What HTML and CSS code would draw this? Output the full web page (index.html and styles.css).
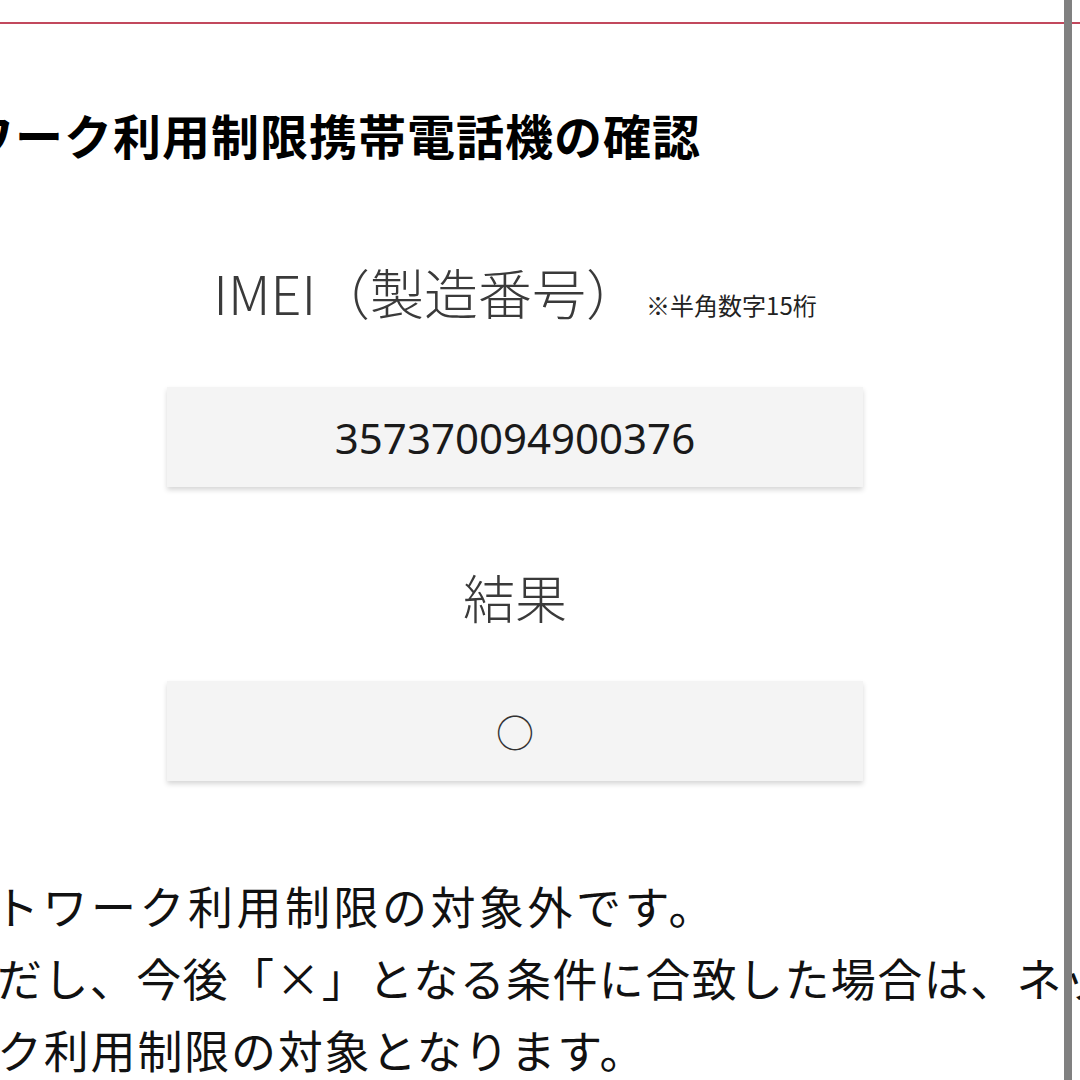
FILE: index.html
```html
<!DOCTYPE html>
<html lang="ja">
<head>
  <meta charset="UTF-8" />
  <meta name="viewport" content="width=device-width, initial-scale=1.0"/>
  <title>ネットワーク利用制限携帯電話機の確認</title>
  <link rel="stylesheet" href="styles.css">
</head>
<body>

  <!-- ヘッダー下線 -->
  <header class="topbar"></header>

  <main class="content">
    <h1 class="page-title">ネットワーク利用制限携帯電話機の確認</h1>

    <div class="field">
      <p class="field-label">IMEI（製造番号）<small class="field-note">※半角数字15桁</small></p>
      <div class="field-box">357370094900376</div>
    </div>

    <div class="field result">
      <p class="field-label">結果</p>
      <div class="field-box"><span class="mark">○</span></div>
    </div>

    <p class="notice">
      <span class="line l1">トワーク利用制限の対象外です。</span>
      <span class="line l2">だし、今後「×」となる条件に合致した場合は、ネットワー</span>
      <span class="line l3">ク利用制限の対象となります。</span>
    </p>
  </main>

  <div class="scrollbar"></div>
</body>
</html>
```

FILE: styles.css
```css
* {
  box-sizing: border-box;
}

html,
body {
  height: 100%;
}

body {
  margin: 0;
  overflow: hidden;
  background: #fff;
  color: #111;
  font-family: "Noto Sans CJK JP", "Noto Sans", sans-serif;
}

.topbar {
  height: 24px;
  border-bottom: 2px solid #c2485d;
}

.content {
  padding-right: 50px;
}

.page-title {
  margin: 74px 0 0 -181px;
  font-size: 48px;
  line-height: 72px;
  font-weight: 700;
  letter-spacing: 1px;
  white-space: nowrap;
  color: #000;
}

.field {
  display: flex;
  flex-direction: column;
  align-items: center;
}

.field-label {
  margin: 82px 0 0;
  font-size: 54px;
  line-height: 80px;
  font-weight: 300;
  color: #3a3a3a;
  white-space: nowrap;
}

.field-note {
  margin-left: 6px;
  font-size: 24px;
  color: #222;
  font-weight: 400;
}

.field-box {
  width: 696px;
  height: 100px;
  margin-top: 42px;
  background: #f4f4f4;
  box-shadow: 0 3px 5px rgba(0, 0, 0, 0.16);
  display: flex;
  align-items: center;
  justify-content: center;
  font-family: "Noto Sans", sans-serif;
  font-size: 42px;
  color: #1a1a1a;
}

.result .field-label {
  margin-top: 70px;
  font-size: 52px;
}

.result .field-box {
  margin-top: 44px;
}

.mark {
  font-family: "Noto Sans CJK JP", sans-serif;
  font-size: 38px;
  line-height: 1;
  color: #333;
}

.notice {
  margin: 89px 0 0;
  font-size: 45px;
  line-height: 72px;
  white-space: nowrap;
}

.line {
  display: block;
}

.l1 {
  margin-left: -6px;
  letter-spacing: 3.5px;
}

.l2 {
  margin-left: -3px;
  letter-spacing: 1.4px;
}

.l3 {
  margin-left: -3px;
  letter-spacing: 1.8px;
}

/* スクロールバー */
.scrollbar {
  position: fixed;
  top: 0;
  right: 8px;
  width: 8px;
  height: 100%;
  background: #808080;
}
```
